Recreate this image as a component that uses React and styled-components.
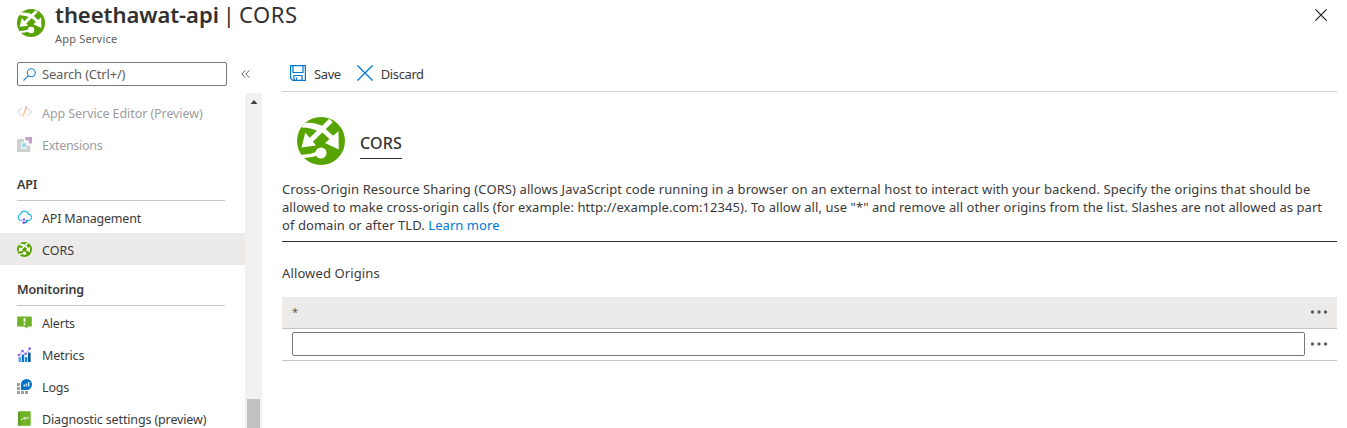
import React from 'react';
import styled, { createGlobalStyle } from 'styled-components';

const GlobalStyle = createGlobalStyle`
  * { box-sizing: border-box; }
  body {
    margin: 0;
    background: #fff;
    color: #3b3a39;
    font-family: "Noto Sans", "Open Sans", sans-serif;
    font-size: 13px;
    overflow: hidden;
  }
`;

const Page = styled.div`
  width: 1347px;
  height: 428px;
  display: flex;
  flex-direction: column;
  overflow: hidden;
`;

const Header = styled.header`
  height: 54px;
  flex: none;
  display: flex;
  align-items: flex-start;
  padding: 0 20px 0 17px;
`;

const HeaderIcon = styled.div`
  width: 28px;
  margin: 9px 10px 0 0;
  svg { display: block; }
`;

const Titles = styled.div`
  flex: 1;
  white-space: nowrap;
`;

const Title = styled.h1`
  margin: 0;
  color: #323130;
  font-size: 22px;
  line-height: 28px;
  font-weight: 400;
  letter-spacing: 0.5px;
  word-spacing: -2.4px;
`;

const ResourceName = styled.strong`
  font-weight: 600;
  letter-spacing: -0.05px;
`;

const Subtitle = styled.div`
  font-size: 11px;
  line-height: 16px;
  color: #605e5c;
  margin-top: 3px;
  letter-spacing: 0.2px;
`;

const CloseButton = styled.button`
  border: 0;
  background: none;
  padding: 0;
  margin-top: 9px;
  display: flex;
`;

const Body = styled.div`
  flex: 1;
  display: flex;
  min-height: 0;
`;

const Sidebar = styled.aside`
  width: 262px;
  flex: none;
  display: flex;
  flex-direction: column;
`;

const SearchRow = styled.div`
  height: 39px;
  flex: none;
  display: flex;
  align-items: flex-start;
  padding: 8px 0 0 17px;
`;

const SearchBox = styled.div`
  width: 210px;
  height: 24px;
  border: 1px solid #7a7876;
  border-radius: 2px;
  display: flex;
  align-items: center;
  gap: 6px;
  padding-left: 5px;
  color: #605e5c;
  svg { flex: none; }
`;

const Collapse = styled.div`
  margin-left: 14px;
  height: 24px;
  display: flex;
  align-items: center;
`;

const MenuArea = styled.div`
  flex: 1;
  display: flex;
  min-height: 0;
  overflow: hidden;
`;

const Menu = styled.nav`
  width: 245px;
  padding-top: 3px;
  font-size: 12.5px;
`;

const MenuItem = styled.div`
  height: 32px;
  display: flex;
  align-items: center;
  padding: 2px 0 0 17px;
  background: ${(p) => (p.$active ? '#edebe9' : 'transparent')};
  opacity: ${(p) => (p.$faded ? 0.5 : 1)};
  svg { flex: none; margin: -2px 10px 0 0; }
`;

const Label = styled.span`
  white-space: nowrap;
  letter-spacing: ${(p) => p.$spacing || 0}px;
`;

const MenuHeading = styled.div`
  height: 41px;
  margin: 0 20px 0 17px;
  border-bottom: 1px solid #c8c6c4;
  padding-top: 16px;
  line-height: 18px;
  font-weight: 600;
  letter-spacing: -0.15px;
`;

const ScrollTrack = styled.div`
  width: 17px;
  background: #f1f1f1;
  display: flex;
  flex-direction: column;
  align-items: center;
  justify-content: space-between;
  padding-top: 6px;
`;

const ScrollThumb = styled.div`
  width: 13px;
  height: 29px;
  background: #c1c1c1;
`;

const Main = styled.main`
  flex: 1;
  padding: 0 10px 0 20px;
`;

const Toolbar = styled.div`
  height: 38px;
  border-bottom: 1px solid #d2d0ce;
  display: flex;
  align-items: center;
  gap: 16px;
  padding: 2px 0 0 8px;
`;

const ToolButton = styled.div`
  display: flex;
  align-items: center;
  gap: 8px;
  svg { margin-top: -2px; }
`;

const Hero = styled.div`
  display: flex;
  padding: 25px 0 0 15px;
  height: 88px;
  svg { display: block; }
`;

const HeroTitle = styled.h2`
  margin: 14px 0 0 15px;
  height: 28px;
  line-height: 25px;
  font-size: 16px;
  font-weight: 500;
  color: #323130;
  border-bottom: 1px solid #323130;
  letter-spacing: 0.2px;
`;

const Description = styled.p`
  margin: 0;
  height: 62px;
  line-height: 18px;
  white-space: nowrap;
  border-bottom: 1px solid #323130;
`;

const Line = styled.span`
  display: block;
  letter-spacing: ${(p) => p.$spacing || 0}px;
`;

const Link = styled.a`
  color: #0078d4;
`;

const FieldLabel = styled.div`
  height: 55px;
  padding-top: 22px;
  line-height: 18px;
  letter-spacing: 0.12px;
`;

const OriginRow = styled.div`
  height: 32px;
  border-bottom: 1px solid #c8c6c4;
  background: ${(p) => (p.$filled ? '#edebe9' : 'transparent')};
  display: flex;
  align-items: center;
  justify-content: space-between;
  padding: 0 9px 2px 10px;
`;

const OriginValue = styled.span`
  font-size: 11px;
  color: #605e5c;
`;

const OriginInput = styled.input`
  width: 1013px;
  height: 24px;
  border: 1px solid #7a7876;
  border-radius: 2px;
  padding: 0 8px;
`;

const AppGlyph = ({ size }) => (
  <svg width={size} height={size} viewBox="0 0 48 48">
    <circle cx="24" cy="24" r="24" fill="#57a300" />
    <path d="M7.500 6.300C13 5 20 6.500 27 9.500L25 16C18 12 11 10.500 4.500 10.500Z" fill="#fff" />
    <g fill="none" stroke="#fff" strokeWidth="5">
      <path d="M34 3.500L12 25" />
      <path d="M24 11L36 22" />
      <path d="M5 39.500C11 39.500 16 38.500 22 36" strokeWidth="3.600" />
    </g>
    <path d="M41.500 14L41.800 32.500L28 26ZM8.300 15.500L4.500 30.500L19 28.500Z" fill="#fff" />
    <circle cx="24" cy="36" r="5.600" fill="#fff" />
  </svg>
);

const CloseGlyph = () => (
  <svg width="12" height="12" viewBox="0 0 12 12" stroke="#201f1e" strokeWidth="1.200">
    <path d="M.4.4L11.600 11.600M11.600.4L.4 11.600" />
  </svg>
);

const SearchGlyph = () => (
  <svg width="13" height="13" viewBox="0 0 13 13" fill="none" stroke="#1f83d6" strokeWidth="1.100">
    <circle cx="8.300" cy="4.700" r="4" />
    <path d="M5.400 7.600L.5 12.500" />
  </svg>
);

const ChevronsGlyph = () => (
  <svg width="9" height="8" viewBox="0 0 9 8" fill="none" stroke="#605e5c">
    <path d="M4.300.3L.8 4L4.300 7.700M8.300.3L4.800 4L8.300 7.700" />
  </svg>
);

const ArrowUp = () => (
  <svg width="8" height="6" viewBox="0 0 8 6">
    <path d="M.5 5L4 1L7.500 5Z" fill="#404040" />
  </svg>
);

const SaveGlyph = () => (
  <svg width="16" height="16" viewBox="0 0 16 16" fill="none" stroke="#0078d4" strokeWidth="1.200">
    <path d="M.6.6H15.400V15.400H2.800L.6 13.200Z" />
    <path d="M3 .6V7.500H13V.6M4 15.400V10.500H12V15.400M6.500 15.400V12.500" />
  </svg>
);

const DiscardGlyph = () => (
  <svg width="16" height="16" viewBox="0 0 16 16" stroke="#0078d4" strokeWidth="1.300">
    <path d="M.4.4L15.600 15.600M15.600.4L.4 15.600" />
  </svg>
);

const DotsGlyph = () => (
  <svg width="18" height="4" viewBox="0 0 18 4" fill="#605e5c">
    <circle cx="2.500" cy="2" r="1.700" />
    <circle cx="9" cy="2" r="1.700" />
    <circle cx="15.500" cy="2" r="1.700" />
  </svg>
);

const EditorGlyph = () => (
  <svg width="15" height="15" viewBox="0 0 15 15" fill="none">
    <path d="M4.500 3L.7 7L4.500 11M10.500 3L14.300 7L10.500 11" stroke="#949494" />
    <path d="M9 3L6 11.500" stroke="#f7941d" strokeWidth="1.700" />
    <path d="M9.400 1.500L8.900 3.200" stroke="#e04848" strokeWidth="1.700" />
  </svg>
);

const ExtensionsGlyph = () => (
  <svg width="15" height="15" viewBox="0 0 15 15">
    <path d="M0 2H7V5H4V11.500H10V8.500H13.300V15H0Z" fill="#a0a0a0" />
    <path d="M8.300 0H15V6.500H11.700V3.500H8.300Z" fill="#804998" />
    <path d="M4 5H10V11.500H4Z" fill="#d9eef7" />
    <path d="M5 6.200H9V10.200H5Z" fill="#45aedb" />
  </svg>
);

const ApiGlyph = () => (
  <svg width="15" height="15" viewBox="0 0 15 15" fill="none">
    <path d="M5 10.300H3.700A3 3 0 0 1 3.300 4.500A4.300 4.300 0 0 1 11.600 4.300A3 3 0 0 1 11.400 10.300H10" stroke="#32bedd" strokeWidth="1.300" />
    <path d="M10 10C10 12 8.800 12.900 7 12.900" stroke="#0078d4" strokeWidth="1.300" />
    <circle cx="7" cy="9.400" r="1.500" fill="#a67af4" />
    <circle cx="6.500" cy="12.700" r="1.100" fill="#773adc" />
  </svg>
);

const AlertsGlyph = () => (
  <svg width="15" height="13" viewBox="0 0 15 13">
    <path d="M.7.500H14.300A.5.5 0 0 1 14.800 1V10.500H10.500V12.500L7.500 10.500H.2V1A.5.5 0 0 1 .7.500Z" fill="#6db325" />
    <path d="M6.600 2H8.400V6.300H6.600ZM6.600 7.300H8.400V9H6.600Z" fill="#fff" />
  </svg>
);

const MetricsGlyph = () => (
  <svg width="15" height="15" viewBox="0 0 15 15">
    <path d="M1.500 10H4V15H1.500Z" fill="#5ea0ef" />
    <path d="M4.700 7.500H7.200V15H4.700Z" fill="#0078d4" />
    <path d="M8 10H10.300V15H8Z" fill="#0f8ae0" />
    <path d="M11 5.500H13.600V15H11Z" fill="#005ba1" />
    <path d="M2 8L5.500 4L8.500 7L12.500 1.800" fill="none" stroke="#b796f9" strokeWidth="1" />
    <g fill="#8661e8">
      <circle cx="2" cy="8" r="1.300" />
      <circle cx="5.500" cy="4" r="1.300" />
      <circle cx="8.700" cy="7" r="1.300" />
      <circle cx="12.700" cy="1.600" r="1.300" />
    </g>
  </svg>
);

const LogsGlyph = () => (
  <svg width="15" height="15" viewBox="0 0 15 15">
    <path d="M0 4H3V7H0ZM0 8H3V11H0ZM0 12H3V15H0ZM4 12H7V15H4ZM8 12H11V15H8ZM4 8H7V11H4Z" fill="#a0a0a0" />
    <path d="M4 11V5.500A5.500 5.500 0 1 1 9.500 11Z" fill="#0072c6" />
    <path d="M6.500 5.500H8V7.500H6.500ZM8.700 4.500H10.200V7.500H8.700ZM11 3H12.500V7.500H11Z" fill="#cfe6f7" />
  </svg>
);

const DiagnosticGlyph = () => (
  <svg width="15" height="15" viewBox="0 0 15 15">
    <rect x="1.300" y=".3" width="12.400" height="14.400" rx=".8" fill="#6db325" />
    <path d="M1.300 1.300H2.600V14.700H1.300Z" fill="#4c8a14" />
    <path d="M4 8.500H5.500L7.500 6L8 8.500L10 6L10.500 7H12" fill="none" stroke="#fff" strokeWidth=".9" />
  </svg>
);

export default function App() {
  return (
    <Page>
      <GlobalStyle />
      <Header>
        <HeaderIcon><AppGlyph size={28} /></HeaderIcon>
        <Titles>
          <Title><ResourceName>theethawat-api</ResourceName> | CORS</Title>
          <Subtitle>App Service</Subtitle>
        </Titles>
        <CloseButton aria-label="Close"><CloseGlyph /></CloseButton>
      </Header>
      <Body>
        <Sidebar>
          <SearchRow>
            <SearchBox><SearchGlyph /><Label $spacing={-0.2}>Search (Ctrl+/)</Label></SearchBox>
            <Collapse><ChevronsGlyph /></Collapse>
          </SearchRow>
          <MenuArea>
            <Menu>
              <MenuItem $faded><EditorGlyph /><Label $spacing={-0.08}>App Service Editor (Preview)</Label></MenuItem>
              <MenuItem $faded><ExtensionsGlyph /><Label $spacing={-0.3}>Extensions</Label></MenuItem>
              <MenuHeading>API</MenuHeading>
              <MenuItem><ApiGlyph /><Label $spacing={-0.2}>API Management</Label></MenuItem>
              <MenuItem $active><AppGlyph size={15} /><Label>CORS</Label></MenuItem>
              <MenuHeading>Monitoring</MenuHeading>
              <MenuItem><AlertsGlyph /><Label $spacing={-0.2}>Alerts</Label></MenuItem>
              <MenuItem><MetricsGlyph /><Label $spacing={-0.15}>Metrics</Label></MenuItem>
              <MenuItem><LogsGlyph /><Label $spacing={-0.15}>Logs</Label></MenuItem>
              <MenuItem><DiagnosticGlyph /><Label $spacing={-0.14}>Diagnostic settings (preview)</Label></MenuItem>
            </Menu>
            <ScrollTrack><ArrowUp /><ScrollThumb /></ScrollTrack>
          </MenuArea>
        </Sidebar>
        <Main>
          <Toolbar>
            <ToolButton><SaveGlyph /><Label $spacing={-0.4}>Save</Label></ToolButton>
            <ToolButton><DiscardGlyph /><Label $spacing={-0.4}>Discard</Label></ToolButton>
          </Toolbar>
          <Hero>
            <AppGlyph size={48} />
            <HeroTitle>CORS</HeroTitle>
          </Hero>
          <Description>
            <Line $spacing={0.09}>Cross-Origin Resource Sharing (CORS) allows JavaScript code running in a browser on an external host to interact with your backend. Specify the origins that should be</Line>
            <Line $spacing={0.06}>allowed to make cross-origin calls (for example: http://example.com:12345). To allow all, use "*" and remove all other origins from the list. Slashes are not allowed as part</Line>
            <Line $spacing={0.06}>of domain or after TLD. <Link>Learn more</Link></Line>
          </Description>
          <FieldLabel>Allowed Origins</FieldLabel>
          <OriginRow $filled><OriginValue>*</OriginValue><DotsGlyph /></OriginRow>
          <OriginRow><OriginInput aria-label="Origin" /><DotsGlyph /></OriginRow>
        </Main>
      </Body>
    </Page>
  );
}
